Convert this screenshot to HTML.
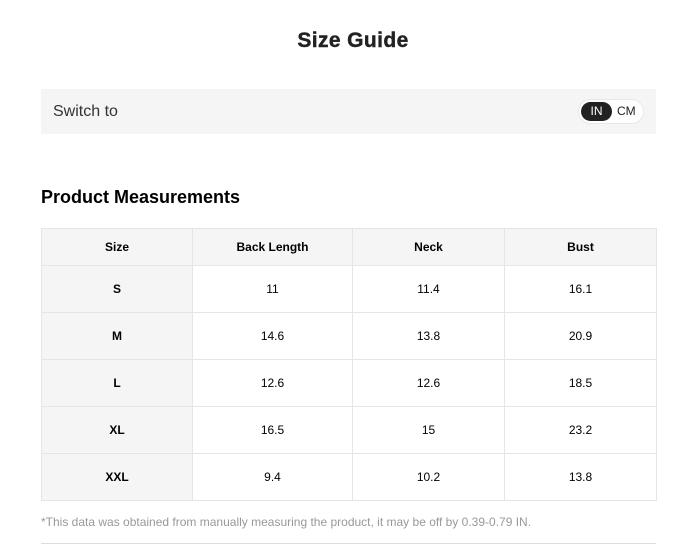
<!DOCTYPE html>
<html><head><meta charset="utf-8"><style>
body{margin:0;width:692px;height:544px;background:#fff;font-family:"Liberation Sans",Arial,sans-serif;position:relative;overflow:hidden;color:#000}
.t{position:absolute;top:29px;left:0;width:706px;text-align:center;font-size:21px;font-weight:bold;color:#222;letter-spacing:0.4px;-webkit-text-stroke:0.4px #222}
.bar{position:absolute;left:41px;top:89px;width:615px;height:45px;background:#f5f5f5}
.bar span{position:absolute;left:12px;top:14px;font-size:16px;color:#333}
.tg{position:absolute;left:537px;top:10px;width:66px;height:25px;border:1px solid #e8e8e8;border-radius:13px;background:#fff;box-sizing:border-box}
.in{position:absolute;left:2px;top:2px;width:31px;height:19px;border-radius:10px;background:#222;color:#fff;font-size:12px;text-align:center;line-height:19px}
.cm{position:absolute;left:38px;top:2px;font-size:12px;line-height:19px;color:#222}
h2{position:absolute;left:41px;top:187px;margin:0;font-size:18px;font-weight:bold}
table{position:absolute;left:41px;top:228px;border-collapse:collapse;width:616px}
td{border:1px solid #e5e5e5;text-align:center;font-size:12px;height:46px;padding:0}
tr:first-child td{height:36px;font-weight:bold;background:#f5f5f5}
td:first-child{background:#f5f5f5;font-weight:bold;width:150px}
.n{position:absolute;left:41px;top:515px;font-size:12px;color:#999}
.l{position:absolute;left:41px;top:543px;width:615px;height:1px;background:#ddd}
</style></head><body>
<div class="t">Size Guide</div>
<div class="bar"><span>Switch to</span><div class="tg"><div class="in">IN</div><div class="cm">CM</div></div></div>
<h2>Product Measurements</h2>
<table>
<tr><td>Size</td><td style="width:159px">Back Length</td><td style="width:151px">Neck</td><td>Bust</td></tr>
<tr><td>S</td><td>11</td><td>11.4</td><td>16.1</td></tr>
<tr><td>M</td><td>14.6</td><td>13.8</td><td>20.9</td></tr>
<tr><td>L</td><td>12.6</td><td>12.6</td><td>18.5</td></tr>
<tr><td>XL</td><td>16.5</td><td>15</td><td>23.2</td></tr>
<tr><td>XXL</td><td>9.4</td><td>10.2</td><td>13.8</td></tr>
</table>
<div class="n">*This data was obtained from manually measuring the product, it may be off by 0.39-0.79 IN.</div>
<div class="l"></div>
</body></html>
